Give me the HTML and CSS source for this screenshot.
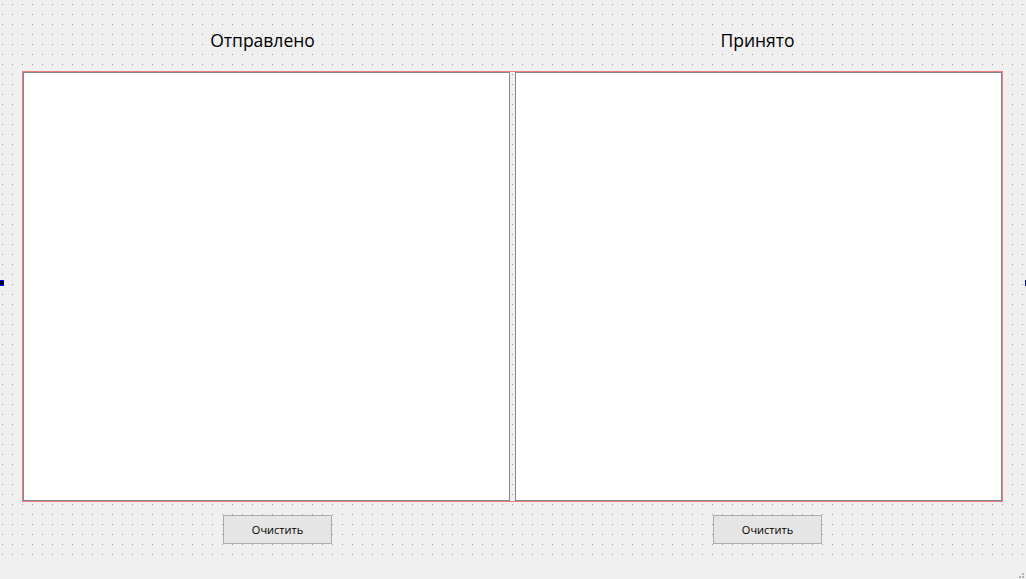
FILE: index.html
```html
<!DOCTYPE html>
<html lang="ru">
<head>
<meta charset="utf-8">
<title>Form</title>
<link rel="stylesheet" href="styles.css">
</head>
<body>
<div class="form">
  <div class="titles">
    <div class="title title-left">Отправлено</div>
    <div class="title title-right">Принято</div>
  </div>
  <div class="layout">
    <div class="edit"></div>
    <div class="edit"></div>
  </div>
  <div class="actions">
    <button class="btn">Очистить</button>
    <button class="btn">Очистить</button>
  </div>
  <span class="handle handle-left"></span>
  <span class="handle handle-right"></span>
</div>
<svg class="grip" width="8" height="8" viewBox="0 0 8 8">
  <rect x="5" y="0" width="2" height="2" fill="#b4b4b4"/>
  <rect x="2" y="3" width="2" height="2" fill="#b4b4b4"/>
  <rect x="5" y="3" width="2" height="2" fill="#b4b4b4"/>
</svg>
</body>
</html>
```
FILE: styles.css
```css
html, body {
  margin: 0;
  padding: 0;
  width: 1026px;
  height: 579px;
  overflow: hidden;
  background: #f0f0f0;
  font-family: "Open Sans", "Noto Sans", "DejaVu Sans", sans-serif;
  position: relative;
}

.form {
  position: relative;
  width: 1026px;
  height: 562px;
  box-sizing: border-box;
  padding-left: 22px;
  background-color: #f0f0f0;
  background-image: conic-gradient(from 270deg at 1px 1px, #9c9c9c 90deg, transparent 0);
  background-size: 10px 10px;
  background-position: 2px 4px;
}

.titles {
  display: grid;
  grid-template-columns: 490px 491px;
  width: 981px;
  height: 71px;
  box-sizing: border-box;
  padding-top: 29px;
}

.title {
  font-size: 17.5px;
  line-height: 22px;
  color: #000;
  text-align: center;
}

.title-left {
  padding-right: 9px;
}

.layout {
  display: flex;
  gap: 5px;
  width: 981px;
  height: 431px;
  box-sizing: border-box;
  border: 1px solid #f27c7c;
}

.edit {
  width: 487px;
  height: 429px;
  box-sizing: border-box;
  border: 1px solid #838790;
  background: #fff;
}

.actions {
  display: flex;
  gap: 381px;
  padding-left: 201px;
  margin-top: 13px;
}

.btn {
  width: 109px;
  height: 29px;
  box-sizing: border-box;
  margin: 0;
  padding: 0;
  border: 1px solid #adadad;
  background: #e5e5e5;
  font-family: "Open Sans", "Noto Sans", sans-serif;
  font-size: 11px;
  color: #000;
  line-height: 27px;
}

.handle {
  position: absolute;
  top: 280px;
  width: 6px;
  height: 6px;
  box-sizing: border-box;
  border: 1px solid #0000ff;
  background: #000;
}

.handle-left {
  left: -2px;
}

.handle-right {
  left: 1025px;
}

.grip {
  position: absolute;
  left: 1017px;
  top: 573px;
}
```
